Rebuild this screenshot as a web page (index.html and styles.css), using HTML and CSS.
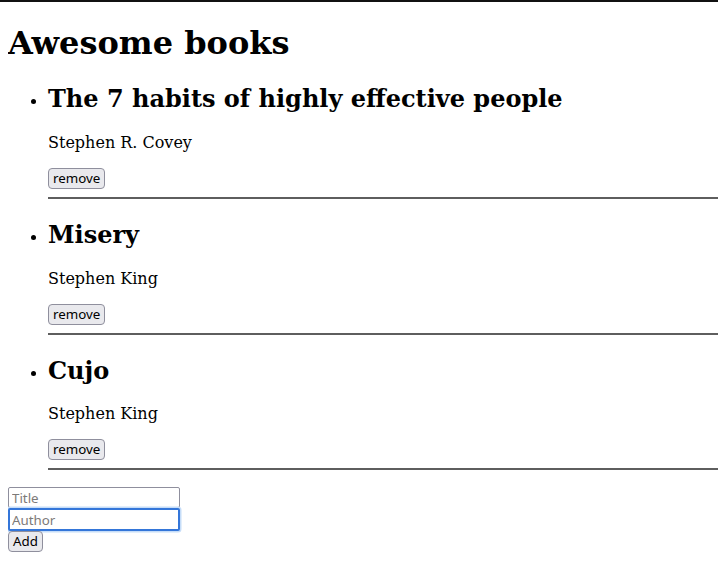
FILE: index.html
```html
<!DOCTYPE html>
<html lang="en">
<head>
<meta charset="utf-8">
<title>Awesome books</title>
<link rel="stylesheet" href="styles.css">
</head>
<body>
<h1 class="page-title">Awesome books</h1>
<ul class="books">
  <li class="book">
    <h2 class="book-title">The 7 habits of highly effective people</h2>
    <p class="book-author">Stephen R. Covey</p>
    <button type="button" class="btn">remove</button>
    <div class="divider"></div>
  </li>
  <li class="book">
    <h2 class="book-title">Misery</h2>
    <p class="book-author">Stephen King</p>
    <button type="button" class="btn">remove</button>
    <div class="divider"></div>
  </li>
  <li class="book">
    <h2 class="book-title">Cujo</h2>
    <p class="book-author">Stephen King</p>
    <button type="button" class="btn">remove</button>
    <div class="divider"></div>
  </li>
</ul>
<form class="add-form">
  <input type="text" class="field" placeholder="Title">
  <input type="text" class="field" placeholder="Author" autofocus>
  <button type="button" class="btn add-btn">Add</button>
</form>
</body>
</html>
```
FILE: styles.css
```css
html {
  border-top: 2px solid #111;
}
body {
  margin: 8px 0 8px 8px;
  font-family: "DejaVu Serif", serif;
  color: #000;
  background: #fff;
}
.page-title {
  margin: 14.44px 0 21.44px;
}
.books {
  margin: 16px 0;
  padding-left: 40px;
}
.book-title {
  margin: 20.92px 0 19.92px;
}
.book-author {
  margin: 16px 0;
}
.btn {
  display: inline-block;
  box-sizing: border-box;
  height: 21px;
  margin: 0;
  padding: 0 4px;
  font-family: "Noto Sans", "DejaVu Sans", sans-serif;
  font-size: 13.33px;
  line-height: 19px;
  color: #000;
  background: #e9e9ed;
  border: 1px solid #8f8f9d;
  border-radius: 4px;
  vertical-align: top;
}
.divider {
  margin: 8px 0;
  height: 2px;
  background: #5e5e5e;
}
.add-form {
  display: flex;
  flex-direction: column;
  align-items: flex-start;
  margin-top: 17px;
}
.field {
  box-sizing: border-box;
  width: 172px;
  height: 21px;
  margin: 0;
  padding: 0 3px;
  font-family: "Noto Sans", "DejaVu Sans", sans-serif;
  font-size: 13.33px;
  color: #000;
  background: #fff;
  border: 1px solid #8f8f9d;
  border-radius: 2px;
  caret-color: #000;
}
.field::placeholder {
  color: #7d7a78;
}
.field:focus {
  outline: none;
  border: 2px solid #3476d9;
  padding: 0 2px;
  box-shadow: 0 0 0 1.5px #c6ddf8;
  height: 23px;
}
.add-btn {
  margin-top: 0;
}
```
